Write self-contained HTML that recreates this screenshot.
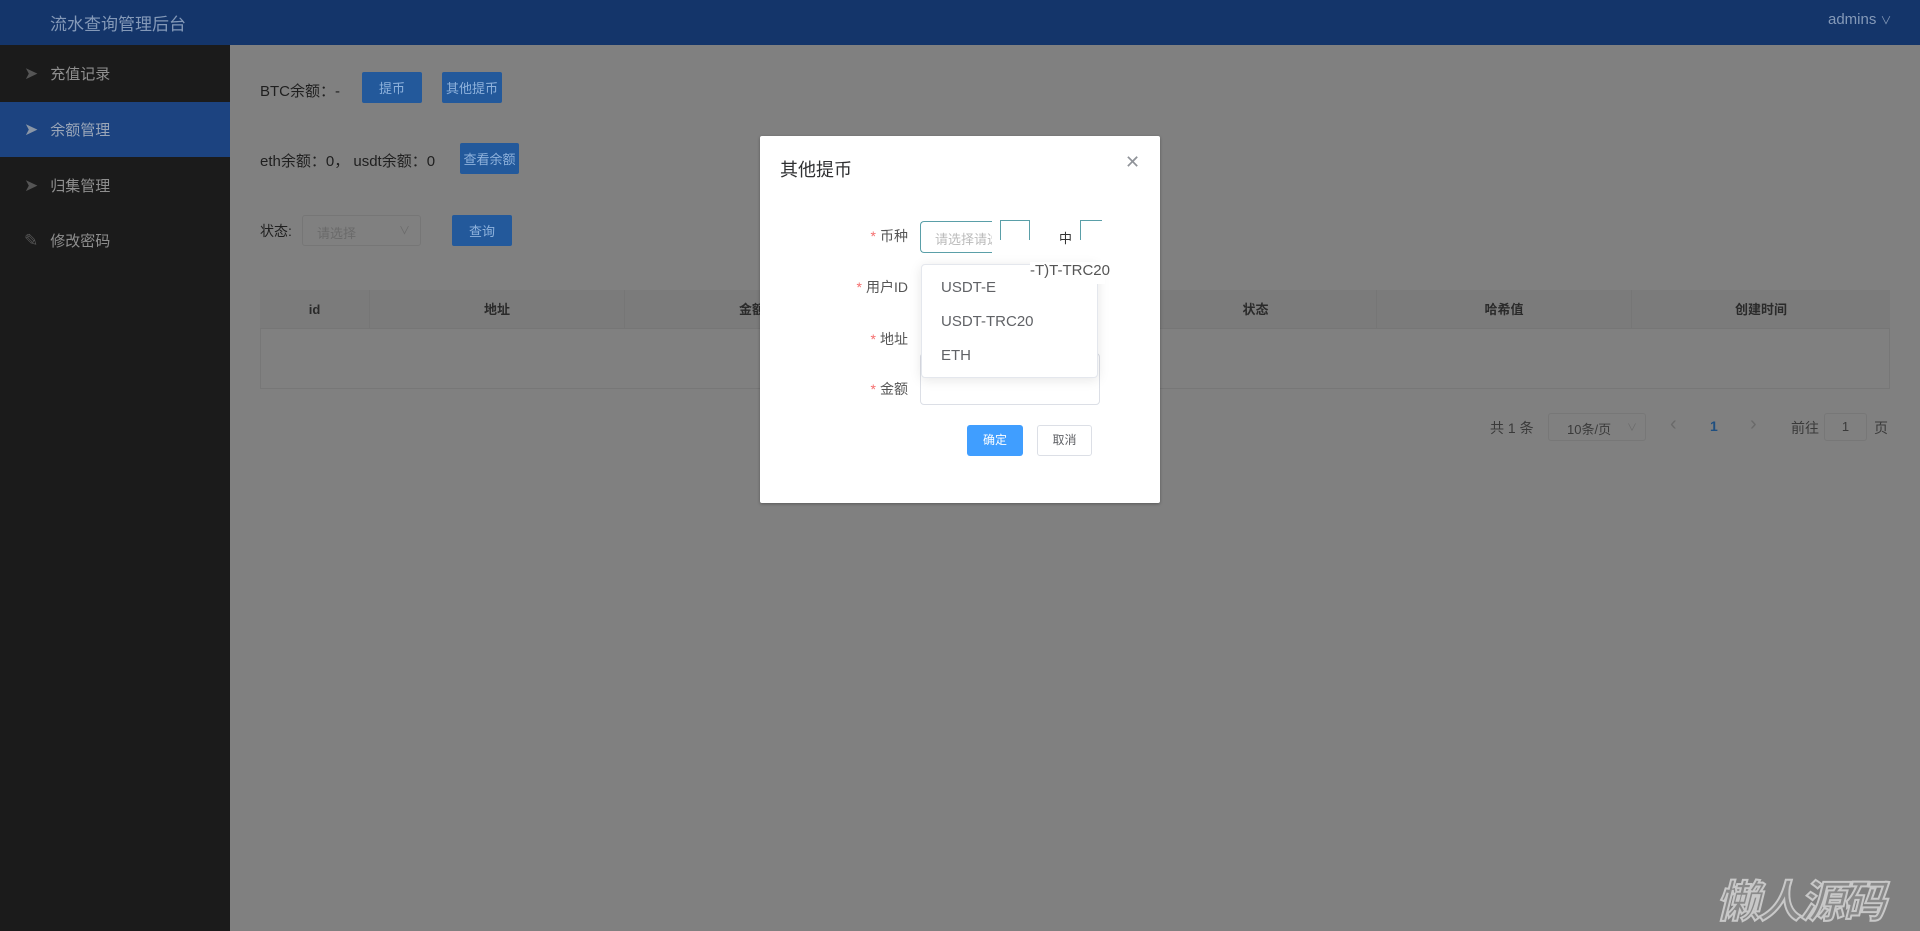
<!DOCTYPE html>
<html><head><meta charset="utf-8"><style>
*{margin:0;padding:0;box-sizing:border-box}
body{width:1920px;height:931px;position:relative;overflow:hidden;background:#808080;font-family:"Liberation Sans","Noto Sans CJK SC",sans-serif;color:#1f1f1f}
.a{position:absolute;white-space:nowrap}
.btn{position:absolute;background:#23599b;color:#8fb2dc;font-size:13px;display:flex;align-items:center;justify-content:center;border-radius:2px}
.th{position:absolute;top:290px;height:39px;line-height:39px;text-align:center;font-size:13px;font-weight:bold;color:#2a2a2a;border-right:1px solid #767676}
.lab{position:absolute;right:1012px;font-size:14px;color:#555}
.lab b{color:#f56c6c;font-weight:normal;margin-right:4px}
</style></head><body>
<div class="a" style="left:0;top:0;width:1920px;height:45px;background:#14356a"></div>
<div class="a" style="left:50px;top:10px;font-size:17px;color:#8499b8">流水查询管理后台</div>
<div class="a" style="left:1828px;top:11px;font-size:15px;color:#8499b8">admins <span style="font-size:11px">&#x2228;</span></div>
<div class="a" style="left:0;top:45px;width:230px;height:886px;background:#1b1b1b"></div>
<div class="a" style="left:0;top:102px;width:230px;height:55px;background:#1c4380"></div>
<div class="a" style="left:24px;top:63px;font-size:15px;color:#8f8f8f;line-height:22px"><span style="color:#555;margin-right:12px;font-size:17px">&#x27A4;</span>充值记录</div>
<div class="a" style="left:24px;top:119px;font-size:15px;color:#9aa6b8;line-height:22px"><span style="color:#8a96a6;margin-right:12px;font-size:17px">&#x27A4;</span>余额管理</div>
<div class="a" style="left:24px;top:175px;font-size:15px;color:#8f8f8f;line-height:22px"><span style="color:#555;margin-right:12px;font-size:17px">&#x27A4;</span>归集管理</div>
<div class="a" style="left:24px;top:230px;font-size:15px;color:#8f8f8f;line-height:22px"><span style="color:#555;margin-right:12px;font-size:17px">&#x270E;</span>修改密码</div>

<div class="a" style="left:260px;top:80px;font-size:15px">BTC余额：-</div>
<div class="btn" style="left:362px;top:72px;width:60px;height:31px">提币</div>
<div class="btn" style="left:442px;top:72px;width:60px;height:31px">其他提币</div>
<div class="a" style="left:260px;top:150px;font-size:15px">eth余额：0，&nbsp;usdt余额：0</div>
<div class="btn" style="left:460px;top:143px;width:59px;height:31px">查看余额</div>
<div class="a" style="left:260px;top:221px;font-size:14px">状态:</div>
<div class="a" style="left:302px;top:215px;width:119px;height:31px;border:1px solid #767676;border-radius:3px;font-size:13px;color:#6a6a6a;padding:7px 14px">请选择<span style="position:absolute;right:10px;top:6px;font-size:11px">&#x2228;</span></div>
<div class="btn" style="left:452px;top:215px;width:60px;height:31px">查询</div>

<div class="a" style="left:260px;top:290px;width:1630px;height:99px;border:1px solid #777;background:#808080"></div>
<div class="a" style="left:260px;top:290px;width:1630px;height:39px;background:#7b7b7b;border-bottom:1px solid #767676"></div>
<div class="th" style="left:260px;width:110px">id</div>
<div class="th" style="left:370px;width:255px">地址</div>
<div class="th" style="left:625px;width:255px">金额</div>
<div class="th" style="left:880px;width:255px"></div>
<div class="th" style="left:1135px;width:242px">状态</div>
<div class="th" style="left:1377px;width:255px">哈希值</div>
<div class="th" style="left:1632px;width:258px;border:none">创建时间</div>

<div class="a" style="left:1490px;top:418px;font-size:14px;color:#3a3a3a">共 1 条</div>
<div class="a" style="left:1548px;top:413px;width:98px;height:28px;border:1px solid #777;border-radius:3px;font-size:13px;color:#3a3a3a;padding:5px 18px">10条/页<span style="position:absolute;right:8px;top:5px;font-size:10px;color:#6a6a6a">&#x2228;</span></div>
<div class="a" style="left:1670px;top:413px;font-size:20px;color:#6a6a6a">&#x2039;</div>
<div class="a" style="left:1710px;top:418px;font-size:14px;font-weight:bold;color:#1f4f80">1</div>
<div class="a" style="left:1750px;top:413px;font-size:20px;color:#6a6a6a">&#x203A;</div>
<div class="a" style="left:1791px;top:418px;font-size:14px;color:#3a3a3a">前往</div>
<div class="a" style="left:1824px;top:413px;width:43px;height:28px;border:1px solid #777;border-radius:3px;text-align:center;line-height:26px;font-size:13px;color:#3a3a3a">1</div>
<div class="a" style="left:1874px;top:418px;font-size:14px;color:#3a3a3a">页</div>

<div class="a" style="left:1716px;top:866px;font-size:44px;font-weight:bold;font-style:italic;color:#8a8a8a;-webkit-text-stroke:2px #c8c8c8;letter-spacing:-2px">懒人源码</div>

<!-- modal -->
<div class="a" style="left:760px;top:136px;width:400px;height:367px;background:#fff;border-radius:2px;box-shadow:0 1px 3px rgba(0,0,0,.3)"></div>
<div class="a" style="left:780px;top:156px;font-size:18px;color:#303133">其他提币</div>
<div class="a" style="left:1125px;top:152px;font-size:18px;color:#909399">&#x2715;</div>
<div class="lab" style="top:226px"><b>*</b>币种</div>
<div class="lab" style="top:277px"><b>*</b>用户ID</div>
<div class="lab" style="top:329px"><b>*</b>地址</div>
<div class="lab" style="top:379px"><b>*</b>金额</div>
<div class="a" style="left:920px;top:221px;width:72px;height:32px;border:1px solid #5a9fa8;border-right:none;border-radius:4px 0 0 4px;font-size:13px;color:#bbb;padding:7px 14px;overflow:hidden">请选择请选</div>
<div class="a" style="left:1000px;top:220px;width:30px;height:20px;border:1px solid #5a9fa8;border-bottom:none"></div>
<div class="a" style="left:1059px;top:228px;font-size:13px;color:#333">中</div>
<div class="a" style="left:1080px;top:220px;width:22px;height:20px;border-left:1px solid #5a9fa8;border-top:1px solid #5a9fa8"></div>
<div class="a" style="left:920px;top:353px;width:180px;height:52px;border:1px solid #dcdfe6;border-radius:4px"></div>
<div class="a" style="left:921px;top:264px;width:177px;height:114px;background:#fff;border:1px solid #e4e7ed;border-radius:4px;box-shadow:0 2px 12px rgba(0,0,0,.1)"></div>
<div class="a" style="left:1030px;top:262px;width:75px;height:22px;background:#fff"></div>
<div class="a" style="left:1030px;top:262px;font-size:15px;color:#555">-T)T-TRC20</div>
<div class="a" style="left:941px;top:279px;font-size:15px;color:#606266">USDT-E</div>
<div class="a" style="left:941px;top:313px;font-size:15px;color:#606266">USDT-TRC20</div>
<div class="a" style="left:941px;top:347px;font-size:15px;color:#606266">ETH</div>
<div class="a" style="left:967px;top:425px;width:56px;height:31px;background:#409eff;border-radius:3px;color:#fff;font-size:12px;text-align:center;line-height:31px">确定</div>
<div class="a" style="left:1037px;top:425px;width:55px;height:31px;border:1px solid #dcdfe6;border-radius:3px;color:#606266;font-size:12px;text-align:center;line-height:29px">取消</div>
</body></html>
